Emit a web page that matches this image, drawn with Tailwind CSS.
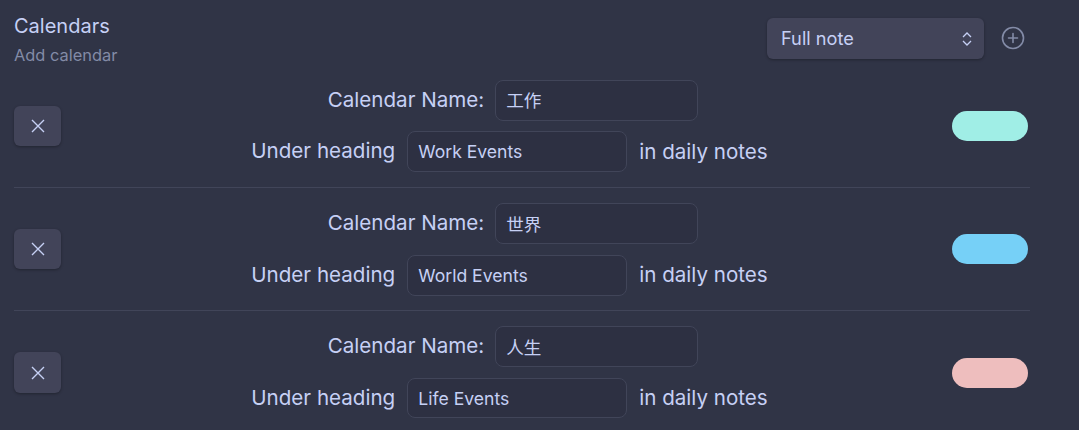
<!DOCTYPE html>
<html><head><meta charset="utf-8"><script src="https://cdn.jsdelivr.net/npm/@tailwindcss/browser@4"></script></head>
<body class="bg-[#303446] w-[1079px] h-[430px] overflow-hidden font-['Inter','Noto_Sans_CJK_SC',sans-serif] text-[#c6d0f5]">
<div class="w-[1016px] ml-[14px]">
  <div class="h-[80px] flex items-start justify-between">
    <div class="pt-[13px]">
      <div class="text-[20px] leading-[26px]">Calendars</div>
      <div class="text-[16.4px] leading-[22px] mt-[5px] text-[#838ba7]">Add calendar</div>
    </div>
    <div class="flex items-center mt-[18px] mr-[5px] gap-[17px]">
      <div class="w-[217px] h-[41px] rounded-[6px] bg-[#424459] shadow-[0_1px_3px_rgba(0,0,0,0.3)] flex items-center justify-between pl-[14px] pr-[11px] text-[18.2px]">
        <span>Full note</span>
        <svg width="12" height="16" viewBox="0 0 12 16" fill="none" stroke="#c6d0f5" stroke-width="1.3"><path d="M2 6l4-4 4 4M2 10l4 4 4-4"/></svg>
      </div>
      <svg class="-mt-[1px]" width="24" height="24" viewBox="0 0 24 24" fill="none" stroke="#838ba7" stroke-width="1.6" stroke-linecap="round"><circle cx="12" cy="12" r="10.5"/><path d="M12 7.5v9M7.5 12h9"/></svg>
    </div>
  </div>

  <div class="h-[108px] flex items-start justify-between border-b border-[#414559]">
    <button class="mt-[26px] w-[47px] h-[40px] rounded-[6px] bg-[#424459] shadow-[0_1px_3px_rgba(0,0,0,0.3)] flex items-center justify-center">
      <svg width="14" height="14" viewBox="0 0 14 14" fill="none" stroke="#c6d0f5" stroke-width="1.4"><path d="M1 1l12 12M13 1L1 13"/></svg>
    </button>
    <div class="flex flex-col items-center ml-[6px] text-[20.6px]">
      <div class="flex items-center gap-[11px] h-[41px] ml-[7px]">
        <span>Calendar Name:</span>
        <div class="w-[203px] h-[41px] rounded-[8px] border border-[#414559] bg-[#2d3042] pl-[10px] pt-[2px] flex items-center text-[17.6px]">工作</div>
      </div>
      <div class="flex items-center gap-[12px] h-[41px] mt-[10px]">
        <span>Under heading</span>
        <div class="w-[220px] h-[41px] rounded-[8px] border border-[#414559] bg-[#2d3042] pl-[10px] pt-[2px] flex items-center text-[17.6px]">Work Events</div>
        <span class="pt-[2px]">in daily notes</span>
      </div>
    </div>
    <div class="mt-[31px] mr-[2px] w-[76px] h-[30px] rounded-[15px] bg-[#a0eee6]"></div>
  </div>

  <div class="h-[123px] pt-[15px] flex items-start justify-between border-b border-[#414559]">
    <button class="mt-[26px] w-[47px] h-[40px] rounded-[6px] bg-[#424459] shadow-[0_1px_3px_rgba(0,0,0,0.3)] flex items-center justify-center">
      <svg width="14" height="14" viewBox="0 0 14 14" fill="none" stroke="#c6d0f5" stroke-width="1.4"><path d="M1 1l12 12M13 1L1 13"/></svg>
    </button>
    <div class="flex flex-col items-center ml-[6px] text-[20.6px]">
      <div class="flex items-center gap-[11px] h-[41px] ml-[7px]">
        <span>Calendar Name:</span>
        <div class="w-[203px] h-[41px] rounded-[8px] border border-[#414559] bg-[#2d3042] pl-[10px] pt-[3px] flex items-center text-[17.6px]">世界</div>
      </div>
      <div class="flex items-center gap-[12px] h-[41px] mt-[11px]">
        <span>Under heading</span>
        <div class="w-[220px] h-[41px] rounded-[8px] border border-[#414559] bg-[#2d3042] pl-[10px] pt-[2px] flex items-center text-[17.6px]">World Events</div>
        <span>in daily notes</span>
      </div>
    </div>
    <div class="mt-[31px] mr-[2px] w-[76px] h-[30px] rounded-[15px] bg-[#76d0f7]"></div>
  </div>

  <div class="h-[120px] pt-[15px] flex items-start justify-between">
    <button class="mt-[26px] w-[47px] h-[41px] rounded-[6px] bg-[#424459] shadow-[0_1px_3px_rgba(0,0,0,0.3)] flex items-center justify-center">
      <svg width="14" height="14" viewBox="0 0 14 14" fill="none" stroke="#c6d0f5" stroke-width="1.4"><path d="M1 1l12 12M13 1L1 13"/></svg>
    </button>
    <div class="flex flex-col items-center ml-[6px] text-[20.6px]">
      <div class="flex items-center gap-[11px] h-[41px] ml-[7px]">
        <span>Calendar Name:</span>
        <div class="w-[203px] h-[41px] rounded-[8px] border border-[#414559] bg-[#2d3042] pl-[10px] pt-[3px] flex items-center text-[17.6px]">人生</div>
      </div>
      <div class="flex items-center gap-[12px] h-[40px] mt-[11px]">
        <span>Under heading</span>
        <div class="w-[220px] h-[40px] rounded-[8px] border border-[#414559] bg-[#2d3042] pl-[10px] pt-[2px] flex items-center text-[17.6px]">Life Events</div>
        <span>in daily notes</span>
      </div>
    </div>
    <div class="mt-[32px] mr-[2px] w-[76px] h-[30px] rounded-[15px] bg-[#eebebe]"></div>
  </div>
</div>
</body></html>
